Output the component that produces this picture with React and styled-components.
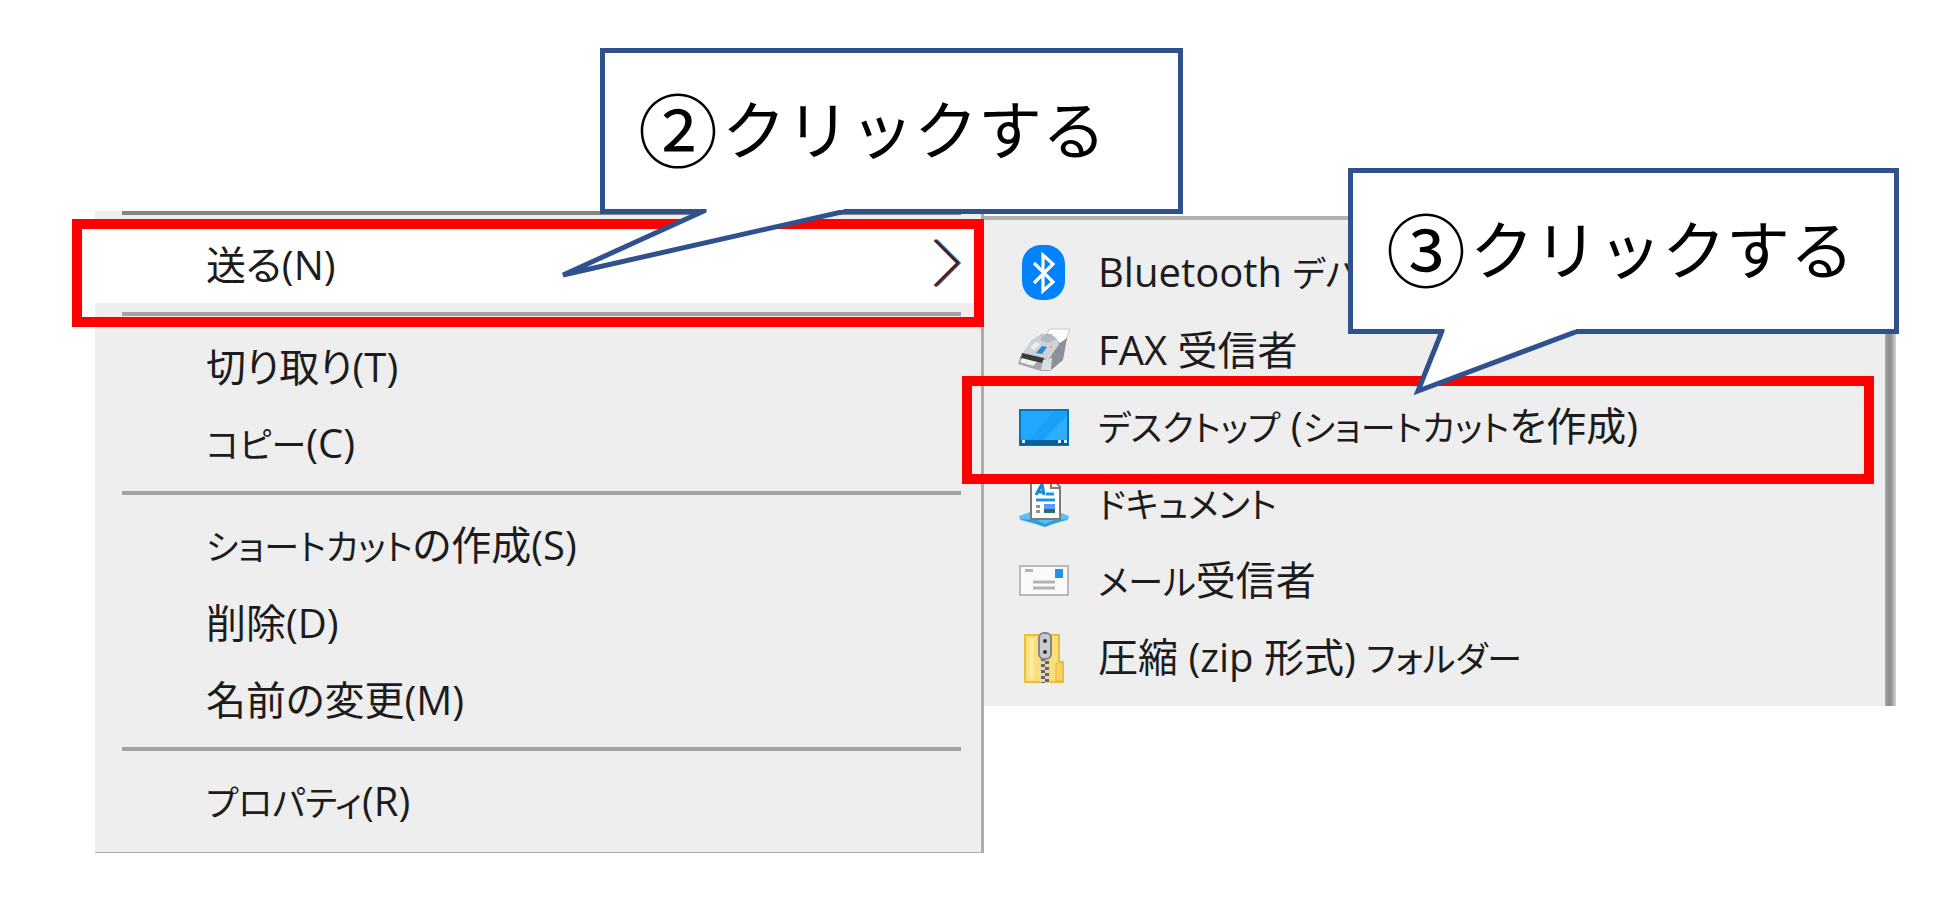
import React from "react";
import styled, { createGlobalStyle, css } from "styled-components";

const GlobalStyle = createGlobalStyle`
  *, *::before, *::after { box-sizing: border-box; }
  body {
    margin: 0;
    background: #fff;
    color: #1c1c1c;
    font-family: "Open Sans", "Noto Sans CJK JP", sans-serif;
  }
`;

const Page = styled.main`
  display: grid;
  grid-template-columns: 889fr 912fr;
  align-items: start;
  padding: 211px 53px 56px 95px;
`;

const Menu = styled.ul`
  margin: 0;
  padding: 0;
  list-style: none;
  background: #eee;
`;

const ContextMenu = styled(Menu)`
  padding-bottom: 12px;
  border-right: 3px solid #acacac;
  border-bottom: 1px solid #acacac;
`;

const SubMenu = styled(Menu)`
  margin-top: 5px;
  padding: 14px 0 10px;
  border-top: 4px solid #b0b0b0;
  border-right: 11px solid #969696;
  border-image: linear-gradient(to right, #b0b0b0 calc(100% - 11px), #8c8c8c calc(100% - 8px), #929292 calc(100% - 5px), #d4d4d4 100%) 4 11 0 0;
`;

const Separator = styled.li`
  height: 4px;
  margin: 9px 20px 12px 27px;
  background: #a2a2a2;

  &:first-child {
    margin-top: 0;
    margin-bottom: 11px;
    background: #868686;
  }
`;

const Item = styled.li`
  position: relative;
`;

const ItemButton = styled.button`
  display: flex;
  align-items: center;
  width: 100%;
  height: 77px;
  padding: 0 20px 0 ${(p) => (p.$withIcon ? "33px" : "111px")};
  gap: 27px;
  border: 0;
  background: ${(p) => (p.$active ? "#fff" : "transparent")};
  color: inherit;
  font-family: inherit;
  font-size: 40px;
  line-height: 52px;
  font-feature-settings: "palt";
  text-align: left;
  white-space: nowrap;
`;

const Label = styled.span`
  flex: 1;
`;

const Katakana = styled.span`
  font-size: 35px;
`;

const Icon = styled.svg`
  flex: none;
  width: 54px;
  height: 60px;
`;

const Arrow = styled.svg`
  flex: none;
  width: 30px;
  height: 52px;
  margin-bottom: 4px;
`;

const Frame = styled.div`
  position: absolute;
  z-index: 1;
  border: 10px solid #f00;
  pointer-events: none;
  ${(p) =>
    p.$side === "left"
      ? css`inset: -7px -3px -24px -23px;`
      : css`inset: -12px 11px -19px -22px;`}
`;

const Callout = styled.div`
  position: absolute;
  z-index: 2;
  display: flex;
  align-items: center;
  height: 166px;
  padding: 0 0 10px 33px;
  border: 5px solid #2f528f;
  background: #fff;
  color: #000;
  font-family: "Noto Sans CJK JP", sans-serif;
  font-size: 64px;
  line-height: 96px;
  white-space: nowrap;
  pointer-events: none;
  ${(p) =>
    p.$side === "left"
      ? css`left: 505px; top: -178px; width: 583px;`
      : css`left: 364px; top: -220px; width: 551px;`}
`;

const Step = styled.span`
  margin-right: 4px;
  font-size: 80px;
`;

const Tail = styled.svg`
  position: absolute;
  top: 156px;
  left: ${(p) => p.$left};
  width: 300px;
  height: 72px;
`;

const BluetoothIcon = () => (
  <Icon viewBox="0 0 54 60" aria-hidden="true">
    <rect x="5" y="2" width="43" height="55" rx="19" fill="#0082fc" />
    <path d="M17 20 L36 39 L26 48 V12 L36 21 L17 40" fill="none" stroke="#fff" strokeWidth="3.2" />
  </Icon>
);

const FaxIcon = () => (
  <Icon viewBox="0 0 54 60" aria-hidden="true">
    <path d="M32 9 L53 9 L46 28 L27 23Z" fill="#fdfdfd" stroke="#c8c9cc" />
    <path d="M25 14 L34 14 L45 25 L50 17 L45 40 L33 51 L24 51 L1 44 L3 37 L10 28 L15 20Z" fill="#a4a8ad" />
    <path d="M15 20 L27 14 L40 19 L43 28 L31 39 L4 35 L10 27Z" fill="#cfd3d8" />
    <path d="M25 16 L34 14 L40 19 L31 23 L23 20Z" fill="#b4b8bf" />
    <path d="M43 23 L50 18 L46 40 L34 50 L34 36Z" fill="#8b9096" />
    <path d="M19 33 L25 26 L30 27 L25 34Z" fill="#258bd2" />
    <path d="M5 33 L27 38 L26 43 L4 39Z" fill="#3a3b3d" />
    <path d="M5 38 L20 42 L16 46 L3 42Z" fill="#f2f2f2" />
    <path d="M26 40 L35 38 L34 50 L24 50Z" fill="#dcdee0" />
    <circle cx="34" cy="27" r="1.5" fill="#e3b277" />
    <path d="M13 27 L19 22 L23 24 L17 30Z" fill="#eceef0" />
  </Icon>
);

const DesktopIcon = () => (
  <Icon viewBox="0 0 54 60" aria-hidden="true">
    <rect x="3" y="13" width="48" height="35" fill="#18a0fb" stroke="#0873b8" strokeWidth="2" />
    <path d="M4 14 H37 L13 42 H4Z" fill="#22a7ff" />
    <path d="M50 18 L27 43 H50Z" fill="#30adff" />
    <rect x="3" y="43" width="48" height="5" fill="#075f9b" />
    <path d="M5 43 h3 v3 h-3z M41 43 h3 v3 h-3z M47 43 h3 v3 h-3z" fill="#d8f2ff" />
  </Icon>
);

const DocumentIcon = () => (
  <Icon viewBox="0 0 54 60" aria-hidden="true">
    <path d="M2 42 L13 38 L42 38 L52 42 L51 46 L35 50 L28 53 L19 50 L3 46Z" fill="#5cc0f2" />
    <path d="M3 45 L20 46 L28 50 L37 46 L51 45 L36 50 L28 53 L19 50Z" fill="#2f9fdc" />
    <path d="M14 5 H35 L43 13 V45 H14Z" fill="#fff" stroke="#7b7b7b" strokeWidth="2" />
    <path d="M34 5 V14 H43" fill="#eee" stroke="#7b7b7b" strokeWidth="2" />
    <path d="M19 21 L25 10 L27 21 M21 18 H27" fill="none" stroke="#1688d8" strokeWidth="3" />
    <path d="M29 20 H37 M19 26 H38" stroke="#2094e2" strokeWidth="3" />
    <path d="M19 31 h4 v3 h-4z M19 36 h4 v3 h-4z" fill="#9a8f8a" />
    <rect x="27" y="30" width="11" height="5" fill="#5c9bff" />
    <rect x="27" y="35" width="11" height="4" fill="#2f6d62" />
  </Icon>
);

const MailIcon = () => (
  <Icon viewBox="0 0 54 60" aria-hidden="true">
    <rect x="3" y="15" width="48" height="29" fill="#fafafa" stroke="#b9b9b9" strokeWidth="2" />
    <rect x="8" y="18" width="8" height="3" fill="#b5b5b5" />
    <rect x="38" y="18" width="8" height="9" fill="#2490ec" />
    <path d="M16 31 H38 M16 37 H38" stroke="#b3b3b3" strokeWidth="3" />
  </Icon>
);

const ZipIcon = () => (
  <Icon viewBox="0 0 54 60" aria-hidden="true">
    <path d="M8 7 H42 V34 H46 V54 H8Z" fill="#fbdf7c" stroke="#e6bf3b" strokeWidth="2" />
    <path d="M12 10 H17 V51 H12Z" fill="#fdeba4" />
    <path d="M39 53 V36 L42 33 L46 36 V53Z" fill="#f6d25c" stroke="#e0b636" />
    <path d="M23 28 H33 V55 H23Z" fill="#e8d9a4" />
    <path d="M26 30 V55" stroke="#62646e" strokeWidth="4" strokeDasharray="3 3" />
    <path d="M30 33 V55" stroke="#62646e" strokeWidth="4" strokeDasharray="3 3" />
    <rect x="22" y="5" width="12" height="26" rx="5" fill="#c9cbd0" stroke="#84868c" strokeWidth="2" />
    <circle cx="28" cy="13" r="2" fill="#333" />
    <circle cx="28" cy="24" r="2" fill="#333" />
  </Icon>
);

const Chevron = () => (
  <Arrow viewBox="0 0 30 52" aria-hidden="true">
    <g fill="none" strokeWidth="2">
      <path d="M3 3 L26 26 L3 49" stroke="#f3b35c" />
      <path d="M6 3 L29 26 L6 49" stroke="#3f9af0" />
      <path d="M4 3 L27 26 L4 49" stroke="#4a2024" strokeWidth="3" />
    </g>
  </Arrow>
);

const ItemLabel = ({ text }) => (
  <Label>
    {text
      .split(/([ァ-ヶー]+)/)
      .map((run, i) => (i % 2 ? <Katakana key={i}>{run}</Katakana> : run))}
  </Label>
);

const StepCallout = ({ side, step, tail, left }) => (
  <Callout $side={side} role="note">
    <Step>{step}</Step>クリックする
    <Tail $left={left} viewBox="0 0 300 72" aria-hidden="true">
      <path d={tail} fill="#fff" stroke="#2f528f" strokeWidth="5" />
    </Tail>
  </Callout>
);

const primary = [
  null,
  { label: "送る(N)", active: true },
  null,
  { label: "切り取り(T)" },
  { label: "コピー(C)" },
  null,
  { label: "ショートカットの作成(S)" },
  { label: "削除(D)" },
  { label: "名前の変更(M)" },
  null,
  { label: "プロパティ(R)" },
];

const targets = [
  { label: "Bluetooth デバ", icon: BluetoothIcon },
  { label: "FAX 受信者", icon: FaxIcon },
  { label: "デスクトップ (ショートカットを作成)", icon: DesktopIcon, marked: true },
  { label: "ドキュメント", icon: DocumentIcon },
  { label: "メール受信者", icon: MailIcon },
  { label: "圧縮 (zip 形式) フォルダー", icon: ZipIcon },
];

export default function App() {
  return (
    <>
      <GlobalStyle />
      <Page>
        <ContextMenu>
          {primary.map((entry, i) =>
            entry ? (
              <Item key={i}>
                <ItemButton type="button" $active={entry.active}>
                  <ItemLabel text={entry.label} />
                  {entry.active && <Chevron />}
                </ItemButton>
                {entry.active && (
                  <>
                    <Frame $side="left" />
                    <StepCallout side="left" step="②" left="-45px" tail="M144 -8 V2 L3 66 L286 2 V-8" />
                  </>
                )}
              </Item>
            ) : (
              <Separator key={i} role="separator" />
            )
          )}
        </ContextMenu>
        <SubMenu>
          {targets.map(({ label, icon: Glyph, marked }) => (
            <Item key={label}>
              <ItemButton type="button" $withIcon>
                <Glyph />
                <ItemLabel text={label} />
              </ItemButton>
              {marked && (
                <>
                  <Frame $side="right" />
                  <StepCallout side="right" step="③" left="55px" tail="M34 -8 V2 L10 62 L170 2 V-8" />
                </>
              )}
            </Item>
          ))}
        </SubMenu>
      </Page>
    </>
  );
}
